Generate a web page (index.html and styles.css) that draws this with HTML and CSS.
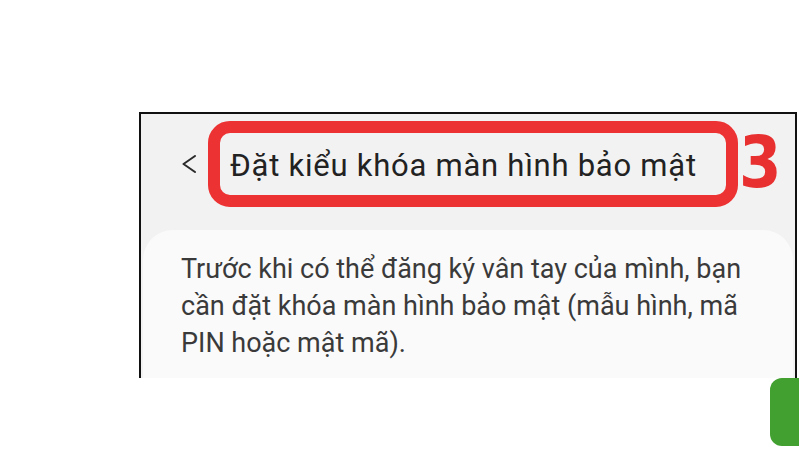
FILE: index.html
```html
<!DOCTYPE html>
<html lang="vi">
<head>
<meta charset="utf-8">
<link rel="stylesheet" href="styles.css">
</head>
<body>
<div class="page">
  <div class="shot">
    <div class="header">
      <svg class="back" width="14" height="18" viewBox="0 0 14 18"><path d="M13 1 L1.5 9 L13 17" fill="none" stroke="#2a2a2a" stroke-width="2" stroke-linecap="round" stroke-linejoin="round"/></svg>
      <div class="mark">
        <span class="title">Đặt kiểu khóa màn hình bảo mật</span>
      </div>
      <span class="step">3</span>
    </div>
    <div class="card">
      <p class="desc">Trước khi có thể đăng ký vân tay của mình, bạn cần đặt khóa màn hình bảo mật (mẫu hình, mã PIN hoặc mật mã).</p>
    </div>
  </div>
  <div class="footer">
    <div class="green"></div>
  </div>
</div>
</body>
</html>
```
FILE: styles.css
```css
html, body {
  margin: 0;
  padding: 0;
  background: #ffffff;
  overflow: hidden;
}
.page {
  width: 799px;
  height: 457px;
  padding-top: 112px;
  box-sizing: border-box;
}
.shot {
  margin-left: 139px;
  width: 658px;
  height: 266px;
  box-sizing: border-box;
  border: 2px solid #111;
  border-bottom: none;
  background: #f2f2f2;
  overflow: hidden;
  display: flex;
  flex-direction: column;
}
.header {
  display: flex;
  align-items: center;
  height: 116px;
  padding-left: 41px;
  box-sizing: border-box;
}
.back {
  display: block;
  margin-right: 12px;
  margin-top: -17px;
}
.mark {
  border: 12px solid #ec3232;
  border-radius: 22px;
  height: 86px;
  width: 530px;
  box-sizing: border-box;
  display: flex;
  align-items: center;
  padding-left: 10px;
  margin-top: -16px;
}
.title {
  font-family: Roboto, "Noto Sans", sans-serif;
  font-size: 31px;
  line-height: 1;
  color: #222;
  white-space: nowrap;
  letter-spacing: 0.75px;
  margin-top: 2px;
}
.step {
  font-family: "DejaVu Sans", sans-serif;
  font-weight: bold;
  font-size: 71px;
  line-height: 1;
  color: #e83030;
  margin-left: 1px;
  margin-top: -20px;
  transform: scaleX(0.86);
  transform-origin: left center;
}
.card {
  flex: 1;
  margin-left: 2px;
  margin-right: 2px;
  background: #fafafa;
  border-radius: 30px 30px 0 0;
  padding: 21px 30px 0 38px;
}
.desc {
  margin: 0;
  font-family: Roboto, "Noto Sans", sans-serif;
  font-size: 27px;
  line-height: 37px;
  color: #3a3a3a;
}
.footer {
  display: flex;
  justify-content: flex-end;
}
.green {
  width: 29px;
  height: 68px;
  background: #41a02f;
  border-radius: 12px 0 0 12px;
}
```
